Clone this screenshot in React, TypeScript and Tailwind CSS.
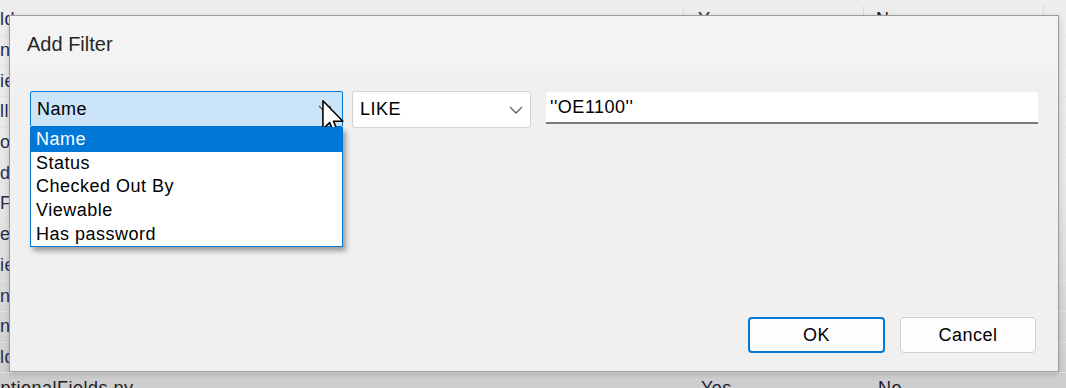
const rows = ["ld", "na", "ie", "ll", "or", "d", "Fi", "e", "ie", "na", "n", "ld"];

const options = ["Name", "Status", "Checked Out By", "Viewable", "Has password"];

const Chevron = ({ className }: { className?: string }) => (
  <svg width="14" height="8" viewBox="0 0 14 8" className={className}>
    <polyline points="1,1 7,7 13,1" fill="none" stroke="#5f5f5f" strokeWidth="1.3" />
  </svg>
);

const Cursor = () => (
  <svg width="25" height="37" viewBox="0 0 14 21" className="absolute left-[321px] top-[99px]">
    <path
      d="M1 1 L1 17 L4.8 13.4 L7.4 19.6 L9.6 18.7 L7 12.6 L12.3 12.6 Z"
      fill="white"
      stroke="black"
      strokeWidth="0.9"
      strokeLinejoin="round"
    />
  </svg>
);

export default function App() {
  return (
    <div className="relative w-[1066px] h-[388px] overflow-hidden bg-gradient-to-b from-[#ededed] via-[#e7e7e7] to-[#cdcdcd] font-['Liberation_Sans',Arial,sans-serif] text-[18px] tracking-[0.5px] text-[#1c1c2e]">
      {/* table behind the dialog */}
      <div className="flex flex-col pt-[5px]">
        {rows.map((r, i) => (
          <div key={i} className="flex h-[30.7px] items-center border-b border-[#e2e2e2]">
            <span className="w-[683px] text-[#2a2a48]">{r}</span>
            <span className="w-[180px] pl-[14px] border-l border-[#dcdcdc]">{i === 0 ? "Yes" : ""}</span>
            <span className="w-[180px] pl-[12px] border-l border-[#dcdcdc]">{i === 0 ? "No" : ""}</span>
            <span className="flex-1 border-l border-[#dcdcdc] h-full" />
          </div>
        ))}
        <div className="flex h-[30px] items-center">
          <span className="w-[697px] -ml-[14px] text-[#222]">OptionalFields.py</span>
          <span className="w-[180px] pl-[18px]">Yes</span>
          <span className="w-[180px] pl-[15px]">No</span>
        </div>
      </div>

      {/* Add Filter dialog */}
      <div className="absolute left-[9px] top-[15px] w-[1050px] h-[357px] flex flex-col border border-[#9c9c9c] bg-[#f0f0f0] shadow-[0_2px_6px_rgba(0,0,0,0.18)]">
        <div className="h-[55px] flex items-center px-[17px] bg-[#f3f3f3] text-[20px] tracking-normal text-[#262626]">
          Add Filter
        </div>
        <div className="flex items-start pt-[20px] pl-[20px]">
          <div className="relative">
            <div className="w-[313px] h-[36px] flex items-center justify-between pl-[6px] pr-[10px] bg-[#cce4f7] border border-[#0078d7] rounded-[2px] text-black">
              <span>Name</span>
              <Chevron />
            </div>
            <div className="absolute left-0 top-[36px] z-10 w-[313px] bg-white border border-[#0078d7] shadow-[3px_4px_5px_rgba(0,0,0,0.35)] text-black">
              {options.map((o, i) => (
                <div
                  key={o}
                  className={
                    i === 0
                      ? "h-[23.6px] flex items-center pl-[5px] bg-[#0078d7] text-white"
                      : "h-[23.6px] flex items-center pl-[5px]"
                  }
                >
                  {o}
                </div>
              ))}
            </div>
          </div>
          <div className="ml-[9px] w-[179px] h-[37px] flex items-center justify-between pl-[7px] pr-[7px] bg-white border border-[#d4d4d4] rounded-[3px] text-black">
            <span>LIKE</span>
            <Chevron />
          </div>
          <div className="ml-[15px] w-[492px] h-[32px] mt-[1px] flex items-center pl-[4px] bg-white border-b-2 border-[#7a7a7a] rounded-t-[3px] text-black">
            ''OE1100''
          </div>
        </div>
        <div className="flex-1" />
        <div className="flex justify-end gap-[15px] pr-[22px] pb-[18px]">
          <button className="w-[137px] h-[36px] flex items-center justify-center bg-[#fdfdfd] border-2 border-[#0078d7] rounded-[4px] text-black">
            OK
          </button>
          <button className="w-[136px] h-[36px] flex items-center justify-center bg-[#fdfdfd] border border-[#cfcfcf] rounded-[4px] text-black">
            Cancel
          </button>
        </div>
      </div>

      <Cursor />
    </div>
  );
}
